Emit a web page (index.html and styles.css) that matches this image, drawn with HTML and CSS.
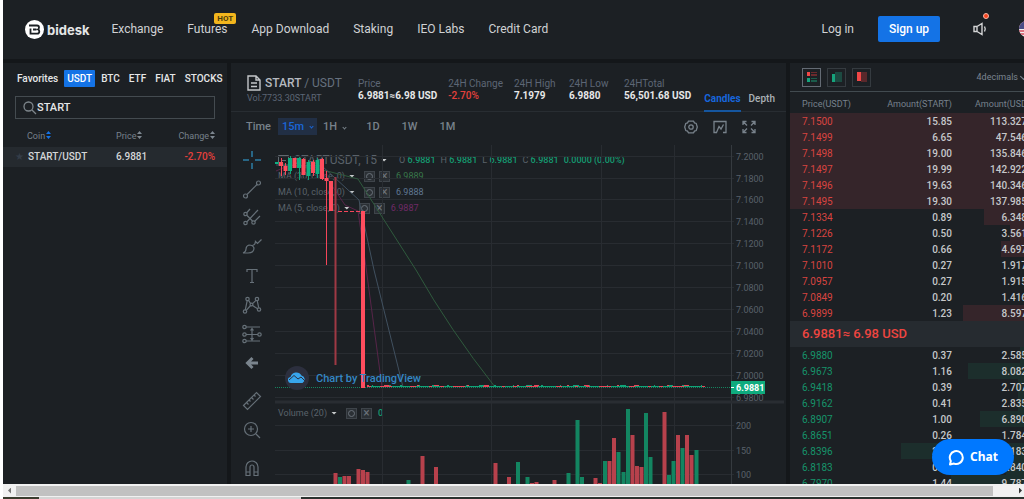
FILE: index.html
```html
<!DOCTYPE html>
<html lang="en">
<head>
<meta charset="utf-8">
<title>Bidesk - START/USDT</title>
<link rel="stylesheet" href="styles.css">
</head>
<body>
<div class="app">
<header class="topbar">
  <a class="brand" href="#">
    <svg width="19" height="19" viewBox="0 0 19 19"><circle cx="9.500" cy="9.500" r="9.500" fill="#fff"/><path d="M4 5.500h8q2 0 2 1.900q0 1.300-1 2q1.300.6 1.300 2q0 2.200-2.200 2.200H5.500V8.500M8 9.500h3.500" fill="none" stroke="#1c2024" stroke-width="1.800"/></svg>
    bidesk</a>
  <nav class="nav">
    <a href="#">Exchange</a>
    <a href="#" class="nav-hot">Futures<span class="hot">HOT</span></a>
    <a href="#">App Download</a>
    <a href="#">Staking</a>
    <a href="#">IEO Labs</a>
    <a href="#">Credit Card</a>
  </nav>
  <div class="account">
    <a href="#">Log in</a>
    <button class="signup">Sign up</button>
    <button class="bell" aria-label="Announcements"><svg width="14" height="14" viewBox="0 0 14 14" fill="none" stroke="#d4d5d6" stroke-width="1.400"><path d="M1 4.500h3v5H1zM4 4.500L9 1.500v11L4 9.500M11.500 4.500q1.500 2.500 0 5"/></svg><span class="dot"></span></button>
    <svg class="flag" width="16" height="16" viewBox="0 0 16 16"><clipPath id="c"><circle cx="8" cy="8" r="8"/></clipPath><g clip-path="url(#c)"><path fill="#eee" d="M0 0h16v16H0z"/><path stroke="#d64a5e" stroke-width="1.500" d="M0 1h16M0 4h16M0 7h16M0 10h16M0 13h16M0 16h16"/><path fill="#4a4d86" d="M0 0h8v8H0z"/></g></svg>
  </div>
</header>
<main class="workspace">
<aside class="markets">
  <nav class="market-tabs">
    <button>Favorites</button><button class="on">USDT</button><button>BTC</button><button>ETF</button><button>FIAT</button><button>STOCKS</button>
  </nav>
  <label class="search">
    <svg width="14" height="14" viewBox="0 0 14 14" fill="none" stroke="#7d858b" stroke-width="1.300"><circle cx="5.500" cy="5.500" r="4.500"/><path d="M9 9l4 4"/></svg>
    <input type="text" value="START" aria-label="Search coin">
  </label>
  <table class="coins">
    <thead><tr><th>Coin<svg class="sort" width="5" height="8" viewBox="0 0 5 8"><path fill="#1473e6" d="M0 3L2.500 0 5 3zM0 5h5L2.500 8z"/></svg></th><th>Price<svg class="sort" width="5" height="8" viewBox="0 0 5 8"><path fill="#7d8790" d="M0 3L2.500 0 5 3zM0 5h5L2.500 8z"/></svg></th><th>Change<svg class="sort" width="5" height="8" viewBox="0 0 5 8"><path fill="#7d8790" d="M0 3L2.500 0 5 3zM0 5h5L2.500 8z"/></svg></th></tr></thead>
    <tbody><tr><td><span class="star">★</span>START/USDT</td><td>6.9881</td><td class="down">-2.70%</td></tr></tbody>
  </table>
</aside>
<section class="center">
  <div class="ticker">
    <svg class="doc" width="14" height="16" viewBox="0 0 14 16" fill="none" stroke="#c3c6c9" stroke-width="1.400"><path d="M1 1h8l4 4v10H1zM9 1v4h4M4 8h6M4 11.500h6"/></svg>
    <div class="pair"><h1>START <span>/ USDT</span></h1></div>
    <p class="vol">Vol:7733.30START</p>
    <dl class="stats">
      <div class="s-price"><dt>Price</dt><dd>6.9881≈6.98 USD</dd></div>
      <div><dt>24H Change</dt><dd class="down">-2.70%</dd></div>
      <div><dt>24H High</dt><dd>7.1979</dd></div>
      <div><dt>24H Low</dt><dd>6.9880</dd></div>
      <div><dt>24HTotal</dt><dd>56,501.68 USD</dd></div>
    </dl>
    <div class="views"><button class="on">Candles</button><button>Depth</button></div>
  </div>
  <div class="frames">
    <span class="time">Time</span>
    <button class="on">15m<i class="chev"></i></button>
    <button class="hour">1H<i class="chev"></i></button>
    <button>1D</button><button>1W</button><button>1M</button>
    <div class="chart-actions">
      <button aria-label="Settings"><svg width="14" height="14" viewBox="0 0 14 14"><path d="M4.500 1.200h5l1 1.700 1.700.5L13.300 7l-1.100 3.600-1.700.5-1 1.700h-5l-1-1.700-1.700-.5L.7 7l1.100-3.600 1.700-.5z"/><circle cx="7" cy="7" r="2.200"/></svg></button>
      <button aria-label="Indicators"><svg width="14" height="14" viewBox="0 0 14 14"><path d="M4 12.500H1v-11h12v11h-3M3.500 12.500L6 6.500l2 2.500 2.500-4.500"/></svg></button>
      <button aria-label="Full screen"><svg width="14" height="14" viewBox="0 0 14 14"><path d="M1 5V1.500h3.500M1 1.500l4 4M9.500 1.500H13V5M13 1.500l-4 4M1 9v3.500h3.500M1 12.500l4-4M9.500 12.500H13V9M13 12.500l-4-4"/></svg></button>
    </div>
  </div>
  <div class="chart">
    <div class="tools">
      <button aria-label="Cross"><svg viewBox="0 0 20 20" class="active"><path d="M10 1v6M10 13v6M1 10h6M13 10h6"/></svg></button>
      <button aria-label="Trend line"><svg viewBox="0 0 20 20"><circle cx="3.500" cy="17" r="2"/><circle cx="16.500" cy="4" r="2"/><path d="M5 15.500L15 5.500"/></svg></button>
      <button aria-label="Pitchfork"><svg viewBox="0 0 20 20"><circle cx="3.500" cy="6" r="1.700"/><circle cx="3.500" cy="15" r="1.700"/><circle cx="11.500" cy="14.500" r="1.700"/><path d="M4.500 5L8 1M4.700 14L16 2M12.500 13.500L18 8M4.500 7l6 6"/></svg></button>
      <button aria-label="Brush"><svg viewBox="0 0 20 20"><path d="M1 16q3-1 3-4t3-4q4 0 5 3q0 5-6 5zM10.500 8.500q3-1 3-4l2 2 4-4"/></svg></button>
      <button aria-label="Text"><svg viewBox="0 0 20 20"><path d="M5 6V3.500h10V6M10 3.500v13M8 16.500h4"/></svg></button>
      <button aria-label="Patterns"><svg viewBox="0 0 20 20"><circle cx="5.500" cy="4" r="1.700"/><circle cx="15" cy="4" r="1.700"/><circle cx="3" cy="16.500" r="1.700"/><circle cx="17" cy="14.500" r="1.700"/><circle cx="9.500" cy="9.500" r="1.400"/><path d="M5.200 5.700L3.300 14.800M15.200 5.700l1.500 7M6.500 5.400l2 3M14 5.400l-3.500 3.200M4.300 15.300l4.200-4.800M10.600 10.400l5 3.400"/></svg></button>
      <button aria-label="Forecast"><svg viewBox="0 0 20 20"><circle cx="2.500" cy="3" r="1.700"/><circle cx="2.500" cy="10.500" r="1.700"/><circle cx="17.500" cy="10.500" r="1.700"/><circle cx="2.500" cy="17" r="1.700"/><path d="M4 3h14M4 10.500h12M4 17h14M10 5v10M8.500 6.500L10 4.500l1.500 2M8.500 14l1.500 2 1.500-2"/></svg></button>
      <button aria-label="Back"><svg viewBox="0 0 20 20" class="back"><path d="M16 10H6M10.500 5l-5 5 5 5"/></svg></button>
      <button aria-label="Measure" class="group"><svg viewBox="0 0 20 20"><path d="M1.500 14.500L14.500 1.500l4 4L5.500 18.500zM4.500 11.500l2 2M7 9l1.500 1.500M9.500 6.500l2 2M12 4l1.500 1.500"/></svg></button>
      <button aria-label="Zoom in"><svg viewBox="0 0 20 20"><circle cx="9" cy="9" r="6.500"/><path d="M14 14l4 4M9 6v6M6 9h6"/></svg></button>
      <button aria-label="Magnet" class="group"><svg viewBox="0 0 20 20"><path d="M4 17.500V9a6 6 0 0 1 12 0v8.500h-4V9a2 2 0 0 0-4 0v8.500zM4 14h4M12 14h4"/></svg></button>
    </div>
    <div class="plot">
      <div class="legend">
        <div class="symbol"><svg width="11" height="11" viewBox="0 0 11 11" fill="none" stroke="#626970"><path d="M.5.5h10v10H.5zM3 5.500h5"/></svg><b>STARTUSDT, 15</b><i class="tri"></i><span class="ohlc">O <em>6.9881</em></span><span class="ohlc">H <em>6.9881</em></span><span class="ohlc">L <em>6.9881</em></span><span class="ohlc">C <em>6.9881</em></span><em>0.0000 (0.00%)</em></div>
        <div class="study"><span>MA (30, close, 0)</span><i class="tri"></i><i class="box gear"></i><i class="box">×</i><span class="v30">6.9889</span></div>
        <div class="study"><span>MA (10, close, 0)</span><i class="tri"></i><i class="box gear"></i><i class="box">×</i><span class="v10">6.9888</span></div>
        <div class="study"><span>MA (5, close, 0)</span><i class="tri"></i><i class="box gear"></i><i class="box">×</i><span class="v5">6.9887</span></div>
      </div>
      <div class="legend volume"><div class="study"><span>Volume (20)</span><i class="tri"></i><i class="box gear"></i><i class="box">×</i><em>0</em></div></div>
      <svg class="canvas" viewBox="275 145 511 339" preserveAspectRatio="xMinYMin slice">
        <path class="grid" d="M275 156.500h459M275 178.500h459M275 199.500h459M275 221.500h459M275 243.500h459M275 265.500h459M275 287.500h459M275 309.500h459M275 331.500h459M275 353.500h459M275 375.500h459M275 397.500h459M275 425.500h459M275 450.500h459M275 474.500h459M382.500 145v339M491.500 145v339M601.500 145v339M674.500 145v339"/>
        <path class="axis" d="M731.500 145v339"/>
        <path class="split" d="M275 402h509"/>
        <g class="ticks">
          <text x="736" y="160">7.2000</text><text x="736" y="182">7.1800</text><text x="736" y="203">7.1600</text><text x="736" y="225">7.1400</text><text x="736" y="247">7.1200</text><text x="736" y="269">7.1000</text><text x="736" y="291">7.0800</text><text x="736" y="313">7.0600</text><text x="736" y="335">7.0400</text><text x="736" y="357">7.0200</text><text x="736" y="379">7.0000</text><text x="736" y="401">6.9800</text><text x="736" y="429">200</text><text x="736" y="454">150</text><text x="736" y="478">100</text>
        </g>
        <path class="ma" stroke="#2f5a3d" d="M276 163L327 171 358 179 370 198 416 270Q450 330 495 387"/>
        <path class="ma" stroke="#40505f" d="M276 165L322 166 359 200 374 270 403 387"/>
        <path class="ma" stroke="#572549" d="M276 171L290 165 320 168 345 205 358 211 365 260 382 387"/>
        <path class="last" d="M275 387.500h456"/>
        <path class="wick-r" d="M281.500 158v18M285.500 163v12M303.500 158v17M313.500 160v16M322.500 158v22M326.500 171v94"/>
        <path class="wick-dim" d="M335.500 177v188"/>
        <path class="wick-g" d="M290.500 156v18M299.500 157v23M308.500 160v20M317.500 158v20"/>
        <path class="body-g" d="M290 158v13M299 158v10M308.500 162v14M317.500 160v14M276.500 162v2"/>
        <path class="body-r" d="M281 162v4M285.500 166v5M294.500 158v10M303.500 159v16M313 162v11M322 159v20M326.500 178v3M331 181v30M363 211v177"/>
        <path d="M338 211.500h22" stroke="#f5455a" stroke-dasharray="4 2"/>
        <path d="M367 386.500h338" stroke="#10a378"/>
        <path d="M367 386.500h338" stroke="#e8475a" stroke-dasharray="4 9 12 18 6 13 3 8"/>
        <path d="M372 385.500h330" stroke="#10a378" stroke-dasharray="1 12 6 9 2 17"/>
        <path d="M367 385.500h335" stroke="#e8475a" stroke-dasharray="2 15 5 28"/>
        <path class="vol-r" d="M335.500 473v12M344.500 476v9M349 476v9M358.500 469v16M363 470v15M367.500 472v13M422.500 456v29M436 467v18M495.500 463v22M509 477v8M532 483v2M536.500 482v3M554.500 480v5M595.500 478v7M600 483v2M609.500 461v24M614 438v47M632.500 435v50M637 466v19M641.500 467v18M664.500 412v73M678 435v50M687 435v50M691.500 455v30"/>
        <path class="vol-g" d="M340 477v8M408.500 480v5M518 462v23M527.500 477v8M568.500 473v12M577.500 420v65M582 477v8M605 461v24M618.500 452v33M623.500 472v13M628 409v76M646 413v72M650.500 457v28M669 475v10M673.500 461v24M682.500 448v37M696.500 450v35"/>
        <path fill="#0fab7e" d="M731 381h34v13h-34z"/><path stroke="#fff" d="M731 387.500h3"/>
        <text class="last-text" x="736" y="391">6.9881</text>
        <circle cx="297" cy="378" r="12" fill="#2c2f3e"/>
        <path fill="#38a5ed" d="M291.500 383a3 3 0 0 1-1-6a6 6 0 0 1 11-1.500a4 4 0 0 1 1 7.500z"/><path fill="none" stroke="#2c2f3e" d="M289 380l5-4.500 4 3.500 3-2 4 4"/>
        <text class="mark" x="316" y="382">Chart by TradingView</text>
      </svg>
    </div>
  </div>
</section>
<section class="book">
  <div class="book-bar">
    <button class="on" aria-label="All orders"><svg width="10" height="10"><path fill="#f04747" d="M0 0h3v4H0z"/><path fill="#16a37c" d="M0 6h3v4H0z"/><path fill="#6c2a2d" d="M4 0h6v1H4zM4 2h6v2H4z"/><path fill="#1b5c4b" d="M4 6h6v1H4zM4 8h6v2H4z"/></svg></button>
    <button aria-label="Bids"><svg width="10" height="10"><path fill="#16a37c" d="M0 2h3v8H0z"/><path fill="#1c4a41" d="M3 0h7v10H3z"/></svg></button>
    <button aria-label="Asks"><svg width="10" height="10"><path fill="#f04747" d="M0 0h4v9H0z"/><path fill="#5a282b" d="M4 0h6v10H4z"/></svg></button>
    <button class="decimals">4decimals<i class="chev"></i></button>
  </div>
  <table class="orders asks">
    <thead><tr><th>Price(USDT)</th><th>Amount(START)</th><th>Amount(USDT)</th></tr></thead>
    <tbody>
    <tr style="--depth:100%"><td>7.1500</td><td>15.85</td><td>113.327</td></tr>
    <tr style="--depth:100%"><td>7.1499</td><td>6.65</td><td>47.546</td></tr>
    <tr style="--depth:100%"><td>7.1498</td><td>19.00</td><td>135.846</td></tr>
    <tr style="--depth:100%"><td>7.1497</td><td>19.99</td><td>142.922</td></tr>
    <tr style="--depth:100%"><td>7.1496</td><td>19.63</td><td>140.346</td></tr>
    <tr style="--depth:100%"><td>7.1495</td><td>19.30</td><td>137.985</td></tr>
    <tr style="--depth:18%"><td>7.1334</td><td>0.89</td><td>6.348</td></tr>
    <tr style="--depth:7%"><td>7.1226</td><td>0.50</td><td>3.561</td></tr>
    <tr style="--depth:11%"><td>7.1172</td><td>0.66</td><td>4.697</td></tr>
    <tr style="--depth:0%"><td>7.1010</td><td>0.27</td><td>1.917</td></tr>
    <tr style="--depth:0%"><td>7.0957</td><td>0.27</td><td>1.915</td></tr>
    <tr style="--depth:0%"><td>7.0849</td><td>0.20</td><td>1.416</td></tr>
    <tr style="--depth:27%"><td>6.9899</td><td>1.23</td><td>8.597</td></tr>
    </tbody>
  </table>
  <p class="mid">6.9881≈ 6.98 USD</p>
  <table class="orders bids">
    <tbody>
    <tr style="--depth:3%"><td>6.9880</td><td>0.37</td><td>2.585</td></tr>
    <tr style="--depth:25%"><td>6.9673</td><td>1.16</td><td>8.082</td></tr>
    <tr style="--depth:4%"><td>6.9418</td><td>0.39</td><td>2.707</td></tr>
    <tr style="--depth:4%"><td>6.9162</td><td>0.41</td><td>2.835</td></tr>
    <tr style="--depth:20%"><td>6.8907</td><td>1.00</td><td>6.890</td></tr>
    <tr style="--depth:0%"><td>6.8651</td><td>0.26</td><td>1.784</td></tr>
    <tr style="--depth:53%"><td>6.8396</td><td>2.95</td><td>20.183</td></tr>
    <tr style="--depth:9%"><td>6.8183</td><td>0.41</td><td>2.840</td></tr>
    <tr style="--depth:32%"><td>6.7970</td><td>1.44</td><td>9.787</td></tr>
    </tbody>
  </table>
</section>
</main>
<div class="hscroll"><span class="arrow left"></span><span class="thumb"></span><span class="arrow right"></span></div>
<div class="edge"><span class="edge-dark"></span><span class="edge-light"></span></div>
<button class="chat"><svg width="17" height="17" viewBox="0 0 17 17" fill="none" stroke="#fff" stroke-width="2"><path d="M2 15.500l.8-3.500A6.500 6.500 0 1 1 6 14.600z" stroke-linejoin="round"/></svg>Chat</button>
</div>
</body>
</html>
```
FILE: styles.css
```css
* { box-sizing: border-box; }
body { margin: 0; background: #fff; font: 10px/12px Roboto, sans-serif; color: #d4d6d8; }
button { font: inherit; color: inherit; background: none; border: 0; padding: 0; }
a { color: inherit; text-decoration: none; }
i, em { font-style: normal; }
h1, p, dl, dd { margin: 0; }
svg { display: block; flex: none; }

.app { position: relative; display: flex; flex-direction: column; height: 100vh; padding-left: 3px; overflow: hidden; }
.topbar { display: flex; align-items: center; height: 59px; padding-left: 22px; background: #1c2024; font-size: 12px; line-height: 16px; overflow: hidden; flex: none; color: #d0d2d4; }
.brand { display: flex; align-items: center; gap: 3px; font: 700 13px/16px Inter, sans-serif; color: #e4e5e6; }
.nav { display: flex; gap: 24px; margin-left: 22px; padding-bottom: 2px; white-space: nowrap; }
.nav-hot { position: relative; }
.hot { position: absolute; left: 27px; top: -8px; padding: 0 3px; border-radius: 2px; background: #f2b51d; color: #4b3b0c; font-size: 8px; line-height: 11px; font-weight: 700; }
.account { display: flex; align-items: center; margin-left: auto; margin-right: -11px; padding-bottom: 2px; white-space: nowrap; }
.signup { width: 62px; height: 26px; margin: 0 33px 0 24px; border-radius: 2px; background: #1473e6; color: #fff; font-weight: 500; }
.bell { position: relative; margin-right: 32px; }
.dot { position: absolute; left: 10px; top: -9px; width: 6px; height: 6px; border-radius: 50%; background: #f5431f; border: 1px solid #f9b8a8; }

.workspace { display: flex; flex: 1; min-height: 0; gap: 4px; padding-top: 4px; background: #14171a; overflow: hidden; }
.markets, .center, .book { background: #1c2024; }
.markets { width: 224px; flex: none; }
.market-tabs { display: flex; gap: 3px; padding: 7px 0 0 11px; font-weight: 500; color: #e6e7e8; }
.market-tabs button { height: 17px; padding: 0 3px; border-radius: 1px; }
.market-tabs .on { background: #1473e6; color: #fff; }
.search { display: flex; align-items: center; height: 23px; margin: 9px 12px 0 12px; padding-left: 7px; border: 1px solid #444b50; }
.search input { flex: 1; min-width: 0; padding: 0; border: 0; outline: 0; background: none; color: #e6e7e8; font: 500 11px/14px Roboto, sans-serif; }
.coins { width: 100%; margin-top: 5px; border-collapse: collapse; table-layout: fixed; }
.coins th { height: 23px; padding: 0; font-size: 9px; font-weight: 400; text-align: left; color: #77818c; }
.coins td { height: 20px; padding: 0; background: #252a2f; font-weight: 500; }
.coins th:first-child { width: 113px; padding-left: 24px; }
.coins th:nth-child(2) { width: 56px; }
.coins th:last-child, .coins td:last-child { padding-right: 12px; text-align: right; }
.sort { display: inline-block; margin-left: 1px; }
.star { display: inline-block; width: 13px; margin-left: 12px; color: #343d48; font: 10px/12px "DejaVu Sans", sans-serif; }
.down, .coins .down { color: #e5403c; }

.center { display: flex; flex-direction: column; flex: 1; min-width: 0; }
.ticker { display: grid; grid-template-columns: 18px 93px 1fr auto; grid-template-rows: 16px 12px; height: 49px; flex: none; padding: 12px 11px 0 16px; border-bottom: 1px solid #282d32; white-space: nowrap; }
.pair { grid-column: 2; }
.ticker h1 { font-size: 12px; line-height: 16px; font-weight: 500; color: #b6bac0; }
.ticker h1 span { color: #66707e; font-weight: 400; }
.vol { grid-column: 1 / 3; grid-row: 2; color: #5c6675; font-size: 9px; line-height: 14px; }
.stats { grid-column: 3; grid-row: 1 / 3; display: flex; gap: 11px; margin-top: 3px; }
.stats div { min-width: 44px; }
.stats .s-price { min-width: 78px; }
.stats dt { line-height: 12px; color: #5c6675; }
.stats dd { line-height: 11px; color: #e6e7e8; font-weight: 700; }
.stats .down { font-weight: 500; color: #e5403c; }
.views { grid-column: 4; grid-row: 1 / 3; display: flex; align-items: flex-start; gap: 8px; padding-top: 16px; color: #aab0b6; font-weight: 500; }
.views button { height: 21px; padding-bottom: 5px; }
.views .on { color: #1766dc; font-weight: 700; border-bottom: 2px solid #15569f; padding-bottom: 3px; }
.frames { display: flex; align-items: center; height: 29px; flex: none; padding-left: 15px; color: #78828b; font-size: 11px; font-weight: 500; }
.frames > button { margin-right: 22px; }
.frames .time { width: 32px; }
.frames .on { display: flex; align-items: center; height: 17px; padding: 0 4px; margin-right: 6px; background: #212f45; color: #1a66d8; }
.frames .hour { margin-right: 20px; }
.chev { display: inline-block; width: 4px; height: 4px; margin: 0 0 0 6px; border: solid currentColor; border-width: 0 1px 1px 0; transform: rotate(45deg); }
.frames .chev { width: 3px; height: 3px; margin-bottom: 1px; }
.chart-actions { display: flex; gap: 15px; margin-left: auto; margin-right: 30px; }
.chart-actions svg { fill: none; stroke: #78828b; stroke-width: 1.3; }
.chart { display: flex; flex: 1; min-height: 0; padding-top: 4px; }
.tools { display: flex; flex-direction: column; width: 44px; flex: none; overflow: hidden; }
.tools button { height: 29px; flex: none; padding-left: 11px; }
.tools .group { margin-top: 9px; }
.tools svg { width: 20px; height: 20px; fill: none; stroke: #667078; stroke-width: 1.2; }
.tools .active { stroke: #2d7ea5; stroke-width: 1.5; }
.tools .back { stroke: #7a848d; stroke-width: 3; }
.plot { position: relative; flex: 1; min-width: 0; overflow: hidden; }
.canvas { position: relative; width: 100%; height: 100%; font-family: Roboto, sans-serif; }
.grid { stroke: #282c31; fill: none; }
.axis { stroke: #353a3f; }
.split { stroke: #292d32; stroke-width: 3; }
.ticks { fill: #59616a; font-size: 9px; }
.ma { fill: none; stroke-width: 1; }
.last { stroke: #16835f; stroke-dasharray: 1 1; }
.wick-r { stroke: #f5455a; }
.wick-dim { stroke: #9f3944; stroke-width: 2; }
.wick-g { stroke: #10a378; }
.body-r { stroke: #ff4d5e; stroke-width: 4; }
.body-g { stroke: #0fb083; stroke-width: 4; }
.vol-r { stroke: #b7414c; stroke-width: 4; }
.vol-g { stroke: #138561; stroke-width: 4; }
.last-text { fill: #fff; font-size: 9px; font-weight: 700; }
.mark { fill: #3487c5; font-size: 11px; font-weight: 500; }
.legend { position: absolute; left: 3px; top: 7px; color: #5a626a; white-space: nowrap; }
.legend.volume { top: 260px; }
.legend em { color: #159a70; font-weight: 500; }
.symbol { display: flex; align-items: center; height: 16px; font-size: 9px; }
.symbol b { margin: 0 4px 0 5px; font-size: 12px; font-weight: 400; }
.ohlc { margin-right: 5px; }
.symbol .tri { margin-right: 12px; }
.tri { width: 6px; height: 3px; background: #c7cacc; clip-path: polygon(0 0, 100% 0, 50% 100%); }
.study { display: flex; align-items: center; gap: 4px; height: 16px; font-size: 9px; }
.study .tri { margin-right: 5px; }
.box { display: grid; place-items: center; width: 11px; height: 11px; border: 1px solid #3e444a; background: #2b3035; font-size: 12px; line-height: 9px; color: #6a727a; }
.gear::before { content: ""; width: 5px; height: 5px; border: 1px solid #6a727a; border-radius: 50%; }
.study .v30, .study .v10, .study .v5, .study em { margin-left: 2px; font-size: 9px; }
.v30 { color: #39774a; }
.v10 { color: #5f7792; }
.v5 { color: #702a67; }

.book { width: 234px; flex: none; overflow: hidden; }
.book-bar { display: flex; align-items: center; gap: 6px; height: 29px; padding-left: 12px; border-bottom: 1px solid #424b50; }
.book-bar button { display: grid; place-items: center; width: 19px; height: 19px; border: 1px solid #353b40; }
.book-bar .on { border-color: #646b74; }
.book-bar .decimals { display: flex; align-items: center; width: auto; margin-left: auto; margin-right: -2px; border: 0; color: #7b8590; font-size: 9px; white-space: nowrap; }
.decimals .chev { margin: 0 0 2px 3px; width: 5px; height: 5px; }
.orders { width: calc(100% + 3px); border-collapse: collapse; table-layout: fixed; }
.orders th { height: 21px; padding: 2px 0 0; font-size: 9px; font-weight: 400; color: #77818c; white-space: nowrap; }
.orders th:first-child, .orders td:first-child { width: 90px; padding-left: 12px; text-align: left; }
.orders th:nth-child(2), .orders td:nth-child(2) { text-align: right; width: 72px; }
.orders th:last-child { padding-left: 23px; text-align: left; }
.orders tbody tr { background: linear-gradient(var(--tint), var(--tint)) right / var(--depth) 100% no-repeat; }
.orders td { height: 16px; padding: 2px 0 0; text-align: right; font-weight: 500; color: #c6c8ca; }
.asks { --tint: #35252a; }
.bids { --tint: #1c2e2c; }
.asks td:first-child { color: #d84440; font-weight: 400; }
.bids td:first-child { color: #16936a; font-weight: 400; }
.mid { height: 26px; padding-left: 12px; background: #262b30; color: #ee4540; font-size: 13px; line-height: 26px; font-weight: 500; }

.hscroll { display: flex; align-items: center; height: 13px; flex: none; background: #f1f1f1; }
.thumb { flex: 1; height: 10px; background: #c1c1c1; }
.arrow { display: grid; place-items: center; width: 13px; height: 13px; }
.arrow::before { content: ""; width: 3px; height: 6px; background: #777; clip-path: polygon(100% 0, 100% 100%, 0 50%); }
.arrow.right { width: 31px; padding-left: 24px; }
.arrow.right::before { background: #333; clip-path: polygon(0 0, 100% 50%, 0 100%); }
.edge { display: flex; height: 2px; flex: none; background: #2b332f; }
.edge-dark { width: 36px; background: #3a3c2e; }
.edge-light { width: 262px; background: #d4d4d4; }
.chat { position: absolute; right: 10px; bottom: 24px; display: flex; align-items: center; justify-content: center; gap: 5px; width: 82px; height: 36px; border-radius: 18px; background: #0078ff; color: #fff; font: 700 12px/16px "Noto Sans", sans-serif; }
```
